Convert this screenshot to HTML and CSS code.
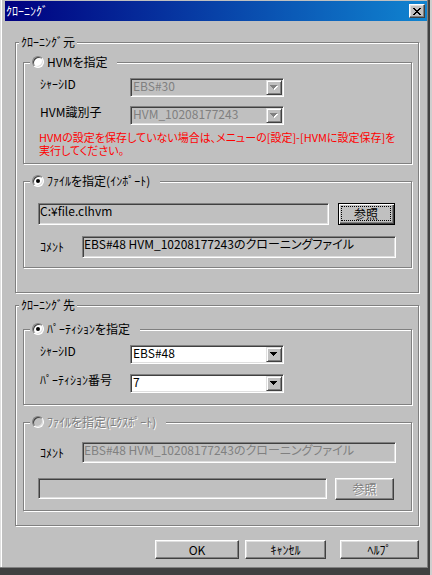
FILE: index.html
```html
<!DOCTYPE html>
<html lang="ja">
<head>
<meta charset="utf-8">
<title>ｸﾛｰﾆﾝｸﾞ</title>
<link rel="stylesheet" href="styles.css">
</head>
<body>
<div class="window">
  <div class="titlebar">
    <span class="title">ｸﾛｰﾆﾝｸﾞ</span>
    <span class="close"><svg width="8" height="7" viewBox="0 0 8 7" shape-rendering="crispEdges"><path d="M0 0h2v1H0zM6 0h2v1H6zM1 1h2v1H1zM5 1h2v1H5zM2 2h4v1H2zM3 3h2v1H3zM2 4h4v1H2zM1 5h2v1H1zM5 5h2v1H5zM0 6h2v1H0zM6 6h2v1H6z" fill="#000"/></svg></span>
  </div>

  <section class="group outer g-src">
    <div class="cap cap-outer">ｸﾛｰﾆﾝｸﾞ元</div>

    <section class="group inner g-hvm">
      <div class="cap cap-inner"><span class="radio"></span><span>HVMを指定</span></div>
      <div class="row row-combo r-hvm1">
        <span class="lbl lbl-combo">ｼｬｰｼID</span>
        <div class="field combo disabled"><span class="val">EBS#30</span><span class="drop"><svg width="8" height="5" viewBox="0 0 8 5" shape-rendering="crispEdges"><path d="M1 1h7v1H1zM2 2h5v1H2zM3 3h3v1H3zM4 4h1v1H4z" fill="#fff"/><path d="M0 0h7v1H0zM1 1h5v1H1zM2 2h3v1H2zM3 3h1v1H3z" fill="#808080"/></svg></span></div>
      </div>
      <div class="row row-combo r-hvm2">
        <span class="lbl lbl-combo">HVM識別子</span>
        <div class="field combo disabled"><span class="val">HVM_10208177243</span><span class="drop"><svg width="8" height="5" viewBox="0 0 8 5" shape-rendering="crispEdges"><path d="M1 1h7v1H1zM2 2h5v1H2zM3 3h3v1H3zM4 4h1v1H4z" fill="#fff"/><path d="M0 0h7v1H0zM1 1h5v1H1zM2 2h3v1H2zM3 3h1v1H3z" fill="#808080"/></svg></span></div>
      </div>
      <p class="warn">HVMの設定を保存していない場合は、メニューの[設定]-[HVMに設定保存]を<br>実行してください。</p>
    </section>

    <section class="group inner g-imp">
      <div class="cap cap-inner"><span class="radio on"></span><span>ﾌｧｲﾙを指定(ｲﾝﾎﾟｰﾄ)</span></div>
      <div class="row r-imp1">
        <div class="field ro path-imp">C:¥file.clhvm</div>
        <div class="btn default browse-imp"><span class="focus">参照</span></div>
      </div>
      <div class="row row-mid r-imp2">
        <span class="lbl lbl-cmt">ｺﾒﾝﾄ</span>
        <div class="field ro cmt">EBS#48 HVM_10208177243のクローニングファイル</div>
      </div>
    </section>
  </section>

  <section class="group outer g-dst">
    <div class="cap cap-outer">ｸﾛｰﾆﾝｸﾞ先</div>

    <section class="group inner g-part">
      <div class="cap cap-inner"><span class="radio on"></span><span>ﾊﾟｰﾃｨｼｮﾝを指定</span></div>
      <div class="row row-combo r-part1">
        <span class="lbl lbl-combo">ｼｬｰｼID</span>
        <div class="field combo"><span class="val">EBS#48</span><span class="drop"><svg width="8" height="5" viewBox="0 0 8 5" shape-rendering="crispEdges"><path d="M0 0h7v1H0zM1 1h5v1H1zM2 2h3v1H2zM3 3h1v1H3z" fill="#000"/></svg></span></div>
      </div>
      <div class="row row-combo r-part2">
        <span class="lbl lbl-combo">ﾊﾟｰﾃｨｼｮﾝ番号</span>
        <div class="field combo"><span class="val">7</span><span class="drop"><svg width="8" height="5" viewBox="0 0 8 5" shape-rendering="crispEdges"><path d="M0 0h7v1H0zM1 1h5v1H1zM2 2h3v1H2zM3 3h1v1H3z" fill="#000"/></svg></span></div>
      </div>
    </section>

    <section class="group inner g-exp">
      <div class="cap cap-inner dim"><span class="radio off"></span><span>ﾌｧｲﾙを指定(ｴｸｽﾎﾟｰﾄ)</span></div>
      <div class="row row-mid r-exp1">
        <span class="lbl lbl-cmt">ｺﾒﾝﾄ</span>
        <div class="field disabled cmt cmt-exp">EBS#48 HVM_10208177243のクローニングファイル</div>
      </div>
      <div class="row r-exp2">
        <div class="field disabled path-exp"></div>
        <div class="btn dim browse-exp">参照</div>
      </div>
    </section>
  </section>

  <div class="actions">
    <div class="btn b-ok">OK</div>
    <div class="btn b-cancel">ｷｬﾝｾﾙ</div>
    <div class="btn b-help">ﾍﾙﾌﾟ</div>
  </div>
</div>
</body>
</html>
```

FILE: styles.css
```css
* { box-sizing: border-box; }
html, body { margin: 0; padding: 0; }
body {
  width: 432px;
  height: 575px;
  overflow: hidden;
  background: #cfcfcf;
  font-family: "Noto Sans CJK JP", sans-serif;
  font-size: 12px;
  line-height: 14px;
  color: #000;
  font-feature-settings: "palt";
}
p { margin: 0; }

.window {
  width: 430px;
  height: 575px;
  padding: 1px 1px 0 5px;
  background: #c0c0c0;
  border-right: 2px solid #404040;
  border-bottom: 7px solid #404040;
  box-shadow: inset -1px -1px #808080, inset 1px 0 #dfdfdf, inset 2px 0 #fff;
}

/* title bar */
.titlebar {
  height: 20px;
  display: flex;
  align-items: center;
  justify-content: space-between;
  padding: 0 2px 0 1px;
  background: linear-gradient(to right, #000080, #1084d0);
}
.title { color: #fff; white-space: nowrap; }
.close {
  width: 16px;
  height: 14px;
  display: flex;
  align-items: center;
  justify-content: center;
  background: #c0c0c0;
  border: 1px solid;
  border-color: #fff #404040 #404040 #fff;
  box-shadow: inset -1px -1px #808080, inset 1px 1px #dfdfdf;
}
.close svg { display: block; }

/* group boxes */
.group {
  border: 1px solid #808080;
  box-shadow: inset 1px 1px #fff, 1px 1px #fff;
}
.cap {
  display: flex;
  align-items: center;
  width: max-content;
  height: 14px;
  margin-top: -8px;
  padding: 0 2px;
  background: #c0c0c0;
  white-space: nowrap;
}
.outer { margin: 0 8px 0 10px; padding: 0 6px 0 7px; }
.g-src { margin-top: 21px; padding-bottom: 24px; }
.g-dst { margin-top: 12px; padding-bottom: 14px; }
.cap-outer { margin-left: -4px; }

.inner { padding: 0 14px; }
.cap-inner { margin-left: -8px; padding-right: 10px; }
.g-hvm { margin-top: 13px; padding-bottom: 6px; }
.g-imp { margin-top: 17px; padding-bottom: 9px; }
.g-part { margin-top: 17px; padding-bottom: 11px; }
.g-exp { margin-top: 17px; padding-bottom: 10px; }

.dim { color: #808080; text-shadow: 1px 1px 0 #fff; }

/* radio */
.radio {
  width: 12px;
  height: 12px;
  margin-right: 3px;
  border-radius: 50%;
  border: 1px solid;
  border-color: #808080 #fff #fff #808080;
  box-shadow: inset 1px 1px #404040, inset -1px -1px #dfdfdf;
  background: #fff;
  display: flex;
  align-items: center;
  justify-content: center;
  flex: none;
}
.radio.on::after {
  content: "";
  width: 4px;
  height: 4px;
  border-radius: 50%;
  background: #000;
}
.radio.off { background: #c0c0c0; }

/* rows */
.row { display: flex; align-items: flex-start; }
.row-mid { align-items: center; }
.row-combo .lbl { margin-top: -1px; }
.lbl { white-space: nowrap; padding-left: 2px; flex: none; }
.lbl-combo { width: 92px; }
.lbl-cmt { width: 44px; }

.r-hvm1 { margin-top: 9px; }
.r-hvm2 { margin-top: 9px; }
.r-imp1 { margin-top: 15px; gap: 9px; }
.r-imp2 { margin-top: 11px; }
.r-part1 { margin-top: 9px; }
.r-part2 { margin-top: 10px; }
.r-exp1 { margin-top: 13px; }
.r-exp2 { margin-top: 15px; gap: 8px; }

.warn {
  margin-top: 6px;
  padding-left: 1px;
  color: #ff0000;
  font-size: 11px;
  line-height: 13px;
  white-space: nowrap;
}

/* fields */
.field {
  display: flex;
  align-items: flex-start;
  padding: 0 1px;
  background: #fff;
  border: 1px solid;
  border-color: #808080 #fff #fff #808080;
  box-shadow: inset 1px 1px #404040, inset -1px -1px #dfdfdf;
  white-space: nowrap;
  overflow: hidden;
  flex: none;
}
.field.ro { background: #c0c0c0; }
.field.disabled { background: #c0c0c0; color: #808080; }
.combo { width: 154px; height: 19px; padding: 0; }
.combo .val { flex: 1; padding-left: 2px; }
.drop {
  width: 16px;
  height: 15px;
  margin: 1px 1px 0 0;
  display: flex;
  align-items: center;
  justify-content: center;
  background: #c0c0c0;
  border: 1px solid;
  border-color: #dfdfdf #404040 #404040 #dfdfdf;
  box-shadow: inset 1px 1px #fff, inset -1px -1px #808080;
  flex: none;
}
.drop svg { display: block; }

.path-imp { width: 291px; height: 22px; }
.cmt { width: 314px; height: 22px; }
.cmt-exp { height: 21px; }
.path-exp { width: 289px; height: 21px; }

/* buttons */
.btn {
  display: flex;
  align-items: center;
  justify-content: center;
  height: 19px;
  background: #c0c0c0;
  border: 1px solid;
  border-color: #fff #404040 #404040 #fff;
  box-shadow: inset -1px -1px #808080, inset 1px 1px #dfdfdf;
  white-space: nowrap;
  flex: none;
}
.btn.default {
  border-color: #000;
  box-shadow: inset 1px 1px #fff, inset -1px -1px #404040, inset -2px -2px #808080;
  padding: 2px 3px 3px 2px;
  align-items: stretch;
}
.focus {
  flex: 1;
  display: flex;
  align-items: center;
  justify-content: center;
  border: 1px dotted #000;
}
.browse-imp { width: 57px; height: 22px; }
.browse-exp { width: 59px; height: 22px; }

.actions {
  display: flex;
  justify-content: flex-end;
  margin: 14px 8px 0 0;
}
.b-ok { width: 84px; }
.b-cancel { width: 81px; margin-left: 6px; }
.b-help { width: 79px; margin-left: 14px; }
```
